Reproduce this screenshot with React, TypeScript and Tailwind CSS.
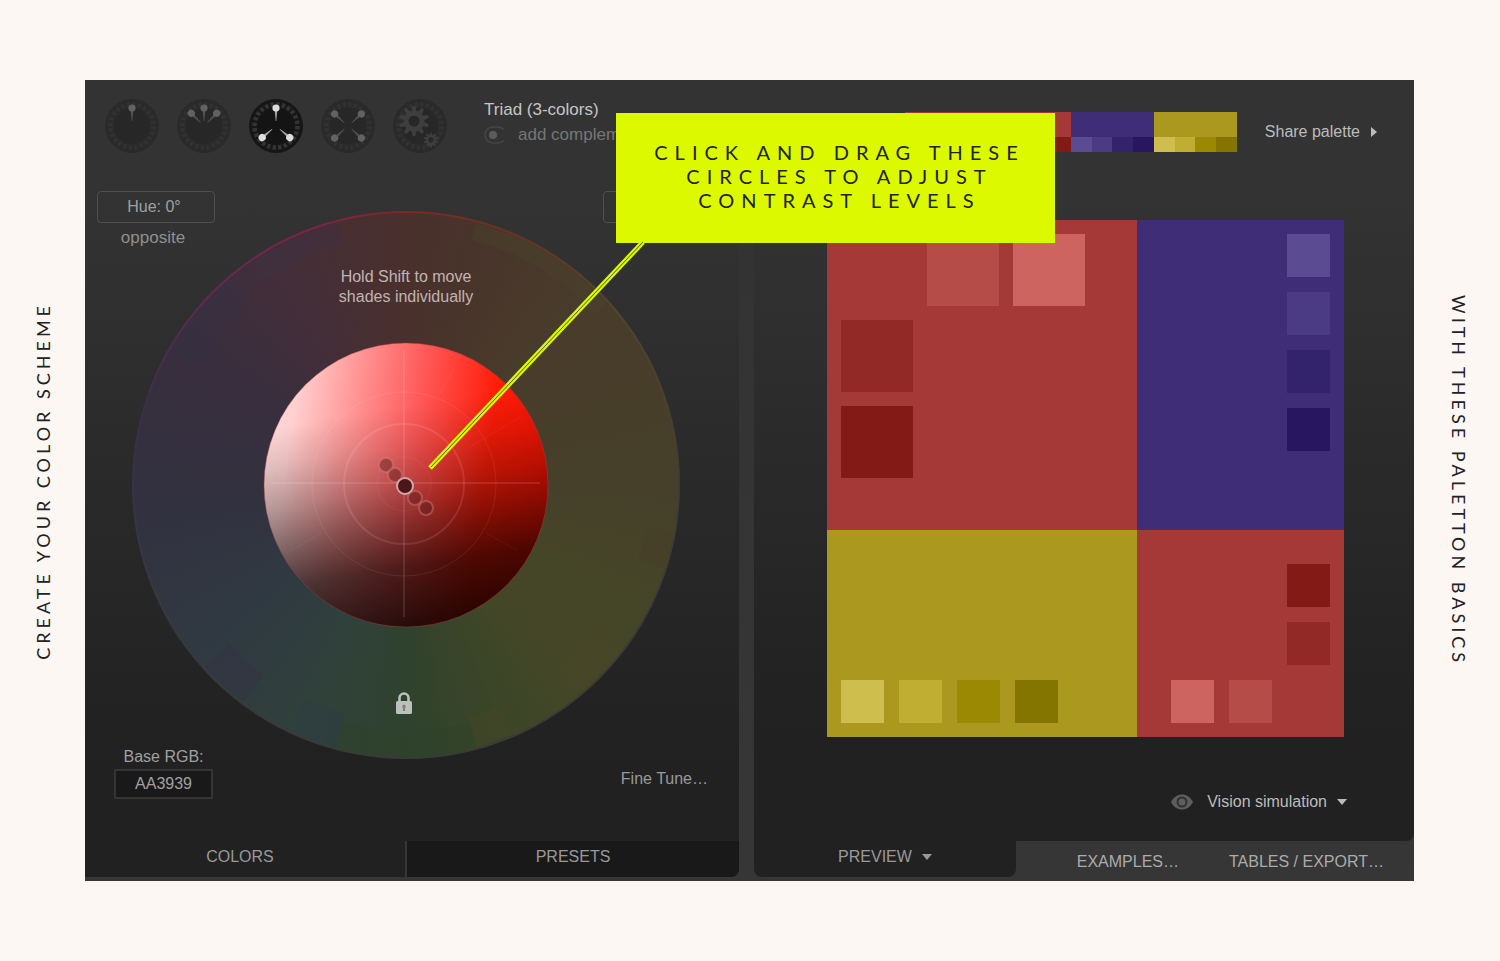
import type { ReactNode } from "react";

const reds = ["#ce6460", "#b54c48", "#922926", "#841a15"];
const purples = ["#5b4b92", "#4b3b84", "#33226c", "#291660"];
const yellows = ["#cdbe4e", "#bfae32", "#9b8904", "#847400"];

const palette = [
  { name: "Primary", base: "#a53937", shades: reds, className: "flex-[2]" },
  { name: "Secondary 1", base: "#402d78", shades: purples, className: "flex-1" },
  { name: "Secondary 2", base: "#ab991f", shades: yellows, className: "flex-1" },
];

const handles = [
  { x: 254, y: 254 },
  { x: 263, y: 264 },
  { x: 283, y: 287 },
  { x: 294, y: 297 },
];

const wedges = [
  { from: 15, to: 48, inner: 254, outer: 271, color: "#4a422a" },
  { from: -42, to: -15, inner: 250, outer: 271, color: "#3f3042" },
  { from: -60, to: -42, inner: 240, outer: 271, color: "#353042" },
  { from: 100, to: 108, inner: 244, outer: 271, color: "#483e29" },
  { from: 128, to: 140, inner: 238, outer: 271, color: "#4a4726" },
  { from: 157, to: 165, inner: 240, outer: 271, color: "#464526" },
  { from: 165, to: 195, inner: 246, outer: 271, color: "#2f422a" },
  { from: 195, to: 205, inner: 236, outer: 271, color: "#2e3b44" },
  { from: 217, to: 228, inner: 238, outer: 271, color: "#353144" },
];

function point(angle: number, radius: number) {
  const a = (angle * Math.PI) / 180;
  return `${274 + radius * Math.sin(a)} ${274 - radius * Math.cos(a)}`;
}

function wedgePath(from: number, to: number, inner: number, outer: number) {
  return `M${point(from, inner)}L${point(from, outer)}A${outer} ${outer} 0 0 1 ${point(to, outer)}L${point(to, inner)}A${inner} ${inner} 0 0 0 ${point(from, inner)}Z`;
}

function Pin({ angle }: { angle: number }) {
  return (
    <g transform={`rotate(${angle} 27 27)`}>
      <path d="M25.6 11h2.8L27.3 22h-.6z" fill="currentColor" opacity=".7" />
      <circle cx="27" cy="9" r="3.6" fill="currentColor" />
    </g>
  );
}

function SchemeButton({
  label,
  active = false,
  children,
}: {
  label: string;
  active?: boolean;
  children: ReactNode;
}) {
  return (
    <button
      type="button"
      aria-label={label}
      aria-pressed={active}
      className={active ? "text-[#dedede]" : "text-[#626262]"}
    >
      <svg viewBox="0 0 54 54" className="size-[54px]">
        <circle cx="27" cy="27" r="27" fill={active ? "#161616" : "#2a2a2a"} />
        <circle
          cx="27"
          cy="27"
          r="21.5"
          fill="none"
          stroke={active ? "#333333" : "#313131"}
          strokeWidth="4.5"
          strokeDasharray="3.4 2.2"
        />
        <circle cx="27" cy="27" r="17.5" fill={active ? "#141414" : "#272727"} />
        {children}
      </svg>
    </button>
  );
}

function Gear({ x, y, scale }: { x: number; y: number; scale: number }) {
  return (
    <g transform={`translate(${x} ${y}) scale(${scale})`} fill="#3e3e3e">
      {[0, 36, 72, 108, 144, 180, 216, 252, 288, 324].map((angle) => (
        <path key={angle} d="M-2.6-9h5.2L1.4-15h-2.8z" transform={`rotate(${angle})`} />
      ))}
      <circle r="8" fill="none" stroke="#3e3e3e" strokeWidth="5" />
    </g>
  );
}

function Swatch({ color, large = false }: { color: string; large?: boolean }) {
  return (
    <div
      className={large ? "size-[72px] shrink-0" : "size-[43px] shrink-0"}
      style={{ backgroundColor: color }}
    />
  );
}

function CaretDown() {
  return (
    <svg viewBox="0 0 10 6" className="w-[10px]">
      <path d="M0 0h10L5 6z" fill="currentColor" />
    </svg>
  );
}

function ColorWheel() {
  return (
    <div className="relative aspect-square rounded-full bg-[conic-gradient(#7a2a28,#663420_25deg,#4f4630_50deg,#3e3d35_90deg,#393b35_180deg,#363a3c_240deg,#382f48_285deg,#642858_318deg,#7c2444_340deg,#7a2a28)] p-[2px]">
      <div className="size-full rounded-full bg-[conic-gradient(#4a302c,#48352b_20deg,#493c2a_45deg,#46402a_90deg,#454528_115deg,#444727_140deg,#3a4528_160deg,#2f422d_180deg,#30413a_200deg,#303a42_230deg,#32313f_265deg,#382e3e_300deg,#432e39_330deg,#4a302c)]" />
      <div className="absolute inset-[24%] rounded-full bg-[linear-gradient(171deg,#00000000_26%,#0000001c_38%,#00000045_50%,#00000078_62%,#000000b0_75%,#000000d4_92%),linear-gradient(98deg,#ffdede_0%,#ffd0d0_12%,#ff9090_32%,#ff5a5a_50%,#ff1c08_74%,#fb1000)]" />
      <svg viewBox="0 0 548 548" className="absolute inset-0 size-full">
        {wedges.map((wedge) => (
          <path
            key={wedge.from}
            d={wedgePath(wedge.from, wedge.to, wedge.inner, wedge.outer)}
            fill={wedge.color}
            opacity=".45"
          />
        ))}
        <circle cx="274" cy="274" r="142" fill="none" stroke="#b04040" strokeOpacity=".4" />
        <g fill="none" stroke="#fff" strokeOpacity=".1">
          <circle cx="272" cy="273" r="27" strokeOpacity=".05" />
          <circle cx="272" cy="273" r="60" strokeWidth="2" />
          <circle cx="272" cy="273" r="92" strokeOpacity=".08" />
          <path d="M272 140v266M139 272h269" strokeWidth="2" />
          <path d="m206 158 18 32m98-32-14 24M158 206l32 18m198-18-54 32M190 322l-32 18m196-18 32 18" strokeOpacity=".05" />
        </g>
        {handles.map((handle) => (
          <circle
            key={handle.x}
            cx={handle.x}
            cy={handle.y}
            r="7"
            fill="#5a1c1c"
            fillOpacity=".45"
            stroke="#dd8888"
            strokeOpacity=".4"
            strokeWidth="2"
          />
        ))}
        <circle cx="273" cy="275" r="8" fill="#4a1718" stroke="#d6a5a5" strokeWidth="2" />
      </svg>
      <p className="absolute inset-x-0 top-[56px] text-center leading-5 text-[#c0b5b2]">
        Hold Shift to move
        <br />
        shades individually
      </p>
      <button
        type="button"
        aria-label="Lock hue"
        className="absolute bottom-[44px] left-1/2 -ml-[11px] text-[#bcc1bb]"
      >
        <svg viewBox="0 0 18 24" className="h-[24px] w-[18px]">
          <path d="M4.500 11V7a4.500 4.500 0 0 1 9 0v4" fill="none" stroke="currentColor" strokeWidth="2.600" />
          <rect x="1" y="10" width="16" height="13" rx="1.500" fill="currentColor" />
          <path d="M9 13.500a2 2 0 0 1 1 3.500v3H8v-3a2 2 0 0 1 1-3.500" fill="#7c827a" />
        </svg>
      </button>
    </div>
  );
}

function SchemePanel() {
  return (
    <section className="flex flex-col rounded-br-lg bg-linear-to-b from-[#333333] from-15% to-[#212121] to-85%">
      <header className="flex gap-[18px] pt-[19px] pl-[20px]">
        <SchemeButton label="Monochromatic">
          <Pin angle={0} />
        </SchemeButton>
        <SchemeButton label="Adjacent colors">
          <Pin angle={-45} />
          <Pin angle={0} />
          <Pin angle={45} />
        </SchemeButton>
        <SchemeButton label="Triad" active>
          <Pin angle={0} />
          <Pin angle={130} />
          <Pin angle={230} />
        </SchemeButton>
        <SchemeButton label="Tetrad">
          <Pin angle={48} />
          <Pin angle={132} />
          <Pin angle={228} />
          <Pin angle={312} />
        </SchemeButton>
        <SchemeButton label="Free style">
          <Gear x={21} y={22} scale={1} />
          <Gear x={38} y={41} scale={0.5} />
        </SchemeButton>
        <div className="ml-[19px] text-[17px] whitespace-nowrap">
          <h1 className="leading-[22px] text-[#c6c6c6]">Triad (3-colors)</h1>
          <label className="mt-[3px] flex items-center gap-[12px] leading-[22px] text-[#767676]">
            <input type="checkbox" className="peer sr-only" />
            <svg viewBox="0 0 22 18" className="h-[18px] w-[22px]">
              <path
                d="M20 3.500A10 8 0 0 0 14 1H9a8 8 0 0 0 0 16h5a10 8 0 0 0 6-2.500"
                fill="none"
                stroke="#464646"
                strokeWidth="1.500"
              />
              <circle cx="9" cy="9" r="4" fill="#5c5c5c" />
            </svg>
            add complementary
          </label>
        </div>
      </header>

      <div className="mt-[38px] grid grow">
        <div className="col-start-1 row-start-1 mt-[20px] mr-[59px] ml-[47px]">
          <ColorWheel />
        </div>
        <div className="col-start-1 row-start-1 flex justify-between self-start pr-[18px] pl-[12px] text-center text-[#8f8f8f]">
          <div>
            <button
              type="button"
              className="block h-[32px] w-[118px] rounded border border-[#505050] pr-1 text-[#a0a0a0]"
            >
              Hue: 0°
            </button>
            <p className="mt-[4px] pr-[6px] text-[17px] leading-[22px]">opposite</p>
          </div>
          <button
            type="button"
            aria-label="Distance"
            className="h-[32px] w-[118px] rounded border border-[#505050]"
          />
        </div>
        <div className="col-start-1 row-start-1 flex items-end justify-between self-end pt-[555px] pr-[31px] pb-[42px] pl-[29px] text-[#a0a0a0]">
          <div className="flex flex-col items-center">
            <label htmlFor="base-rgb" className="leading-[22px]">
              Base RGB:
            </label>
            <input
              id="base-rgb"
              defaultValue="AA3939"
              className="mt-[1px] h-[30px] w-[99px] border-2 border-[#353535] bg-[#191919] text-center"
            />
          </div>
          <a href="#fine-tune" className="mb-[9px] leading-[22px] text-[#9a9a9a]">
            Fine Tune…
          </a>
        </div>
      </div>

      <nav className="grid h-[36px] grid-cols-[320fr_334fr] text-[#999999]">
        <button type="button" className="pr-[10px] pb-1">COLORS</button>
        <button type="button" className="rounded-br-lg border-l-2 border-[#363636] bg-[#191919] pb-1">
          PRESETS
        </button>
      </nav>
    </section>
  );
}

function Preview() {
  return (
    <div className="grid aspect-square grid-cols-[3fr_2fr] grid-rows-[3fr_2fr]">
      <div className="flex flex-col gap-[14px] bg-[#a53937] p-[14px]">
        <div className="flex gap-[14px] pl-[86px]">
          <Swatch color={reds[1]} large />
          <Swatch color={reds[0]} large />
        </div>
        <Swatch color={reds[2]} large />
        <Swatch color={reds[3]} large />
      </div>
      <div className="flex flex-col items-end gap-[15px] bg-[#402d78] p-[14px]">
        {purples.map((color) => (
          <Swatch key={color} color={color} />
        ))}
      </div>
      <div className="flex items-end gap-[15px] bg-[#ab991f] p-[14px]">
        {yellows.map((color) => (
          <Swatch key={color} color={color} />
        ))}
      </div>
      <div className="flex flex-col items-end justify-end gap-[15px] bg-[#a53937] p-[14px]">
        <Swatch color={reds[3]} />
        <Swatch color={reds[2]} />
        <div className="mr-[58px] flex gap-[15px]">
          <Swatch color={reds[0]} />
          <Swatch color={reds[1]} />
        </div>
      </div>
    </div>
  );
}

function PreviewPanel() {
  return (
    <section className="flex flex-col">
      <div className="flex grow flex-col rounded-br-lg bg-linear-to-b from-[#333333] from-15% to-[#212121] to-85%">
        <header className="flex items-center justify-end pt-[32px] pr-[37px]">
          <div className="flex h-[40px] w-[332px]">
            {palette.map((group) => (
              <div key={group.name} className={`flex flex-col ${group.className}`}>
                <div className="h-[25px]" style={{ backgroundColor: group.base }} />
                <div className="flex grow">
                  {group.shades.map((color) => (
                    <div key={color} className="flex-1" style={{ backgroundColor: color }} />
                  ))}
                </div>
              </div>
            ))}
          </div>
          <button type="button" className="ml-[28px] flex items-center gap-[11px] text-[#bcbcbc]">
            Share palette
            <svg viewBox="0 0 6 10" className="h-[10px] w-[6px]">
              <path d="M0 0l6 5-6 5z" fill="currentColor" />
            </svg>
          </button>
        </header>
        <div className="mt-[68px] mr-[70px] ml-[73px]">
          <Preview />
        </div>
        <button
          type="button"
          className="mt-[54px] mr-[67px] mb-[28px] flex items-center gap-[10px] self-end leading-[22px] text-[#bcbcbc]"
        >
          <svg viewBox="0 0 22 16" className="mr-[4px] w-[22px]">
            <path d="M0 8C5-2 17-2 22 8 17 18 5 18 0 8" fill="#5e5e5e" />
            <circle cx="11" cy="8" r="4.500" fill="none" stroke="#303030" strokeWidth="2" />
          </svg>
          Vision simulation
          <CaretDown />
        </button>
      </div>
      <nav className="grid h-[40px] grid-cols-[262fr_398fr] text-[#ababab]">
        <button
          type="button"
          className="flex h-[36px] items-center justify-center gap-[10px] rounded-b-lg bg-[#212121] pb-1 text-[#999999]"
        >
          PREVIEW
          <CaretDown />
        </button>
        <div className="flex items-center justify-end gap-[50px] pt-[2px] pr-[30px]">
          <a href="#examples">EXAMPLES…</a>
          <a href="#tables">TABLES / EXPORT…</a>
        </div>
      </nav>
    </section>
  );
}

function Callout() {
  return (
    <aside className="absolute top-[33px] left-[531px] w-[439px]">
      <p className="bg-[#dcf900] pt-[27px] pb-[31px] pl-[8px] text-center font-['Lato',sans-serif] text-[20px] leading-[24px] tracking-[7px] text-[#222222]">
        CLICK AND DRAG THESE
        <br />
        CIRCLES TO ADJUST
        <br />
        CONTRAST LEVELS
      </p>
      <svg
        viewBox="0 0 220 230"
        className="absolute top-[129px] right-full -mr-[30px] h-[230px] w-[220px]"
      >
        <path d="M217 0L4 226" stroke="#dcf900" strokeWidth="5" />
        <path d="M217 0L5 225" stroke="#4f5a18" strokeWidth="1" />
      </svg>
    </aside>
  );
}

export default function App() {
  return (
    <main className="grid min-h-screen grid-cols-[85px_1fr_86px] items-center bg-[#fcf7f3] py-[80px] font-['Liberation_Sans',Arial,sans-serif] text-[16px]">
      <p className="rotate-180 justify-self-center font-['Lato',sans-serif] text-[18px] leading-6 tracking-[4px] text-[#222222] [writing-mode:vertical-rl]">
        CREATE YOUR COLOR SCHEME
      </p>
      <div className="relative grid grid-cols-[654fr_660fr] gap-[15px] bg-linear-to-b from-[#333333] from-15% to-[#363636]">
        <div className="grid pb-[4px]">
          <SchemePanel />
        </div>
        <PreviewPanel />
        <Callout />
      </div>
      <p className="justify-self-center pl-1 font-['Lato',sans-serif] text-[18px] leading-6 tracking-[4px] text-[#222222] [writing-mode:vertical-rl]">
        WITH THESE PALETTON BASICS
      </p>
    </main>
  );
}
